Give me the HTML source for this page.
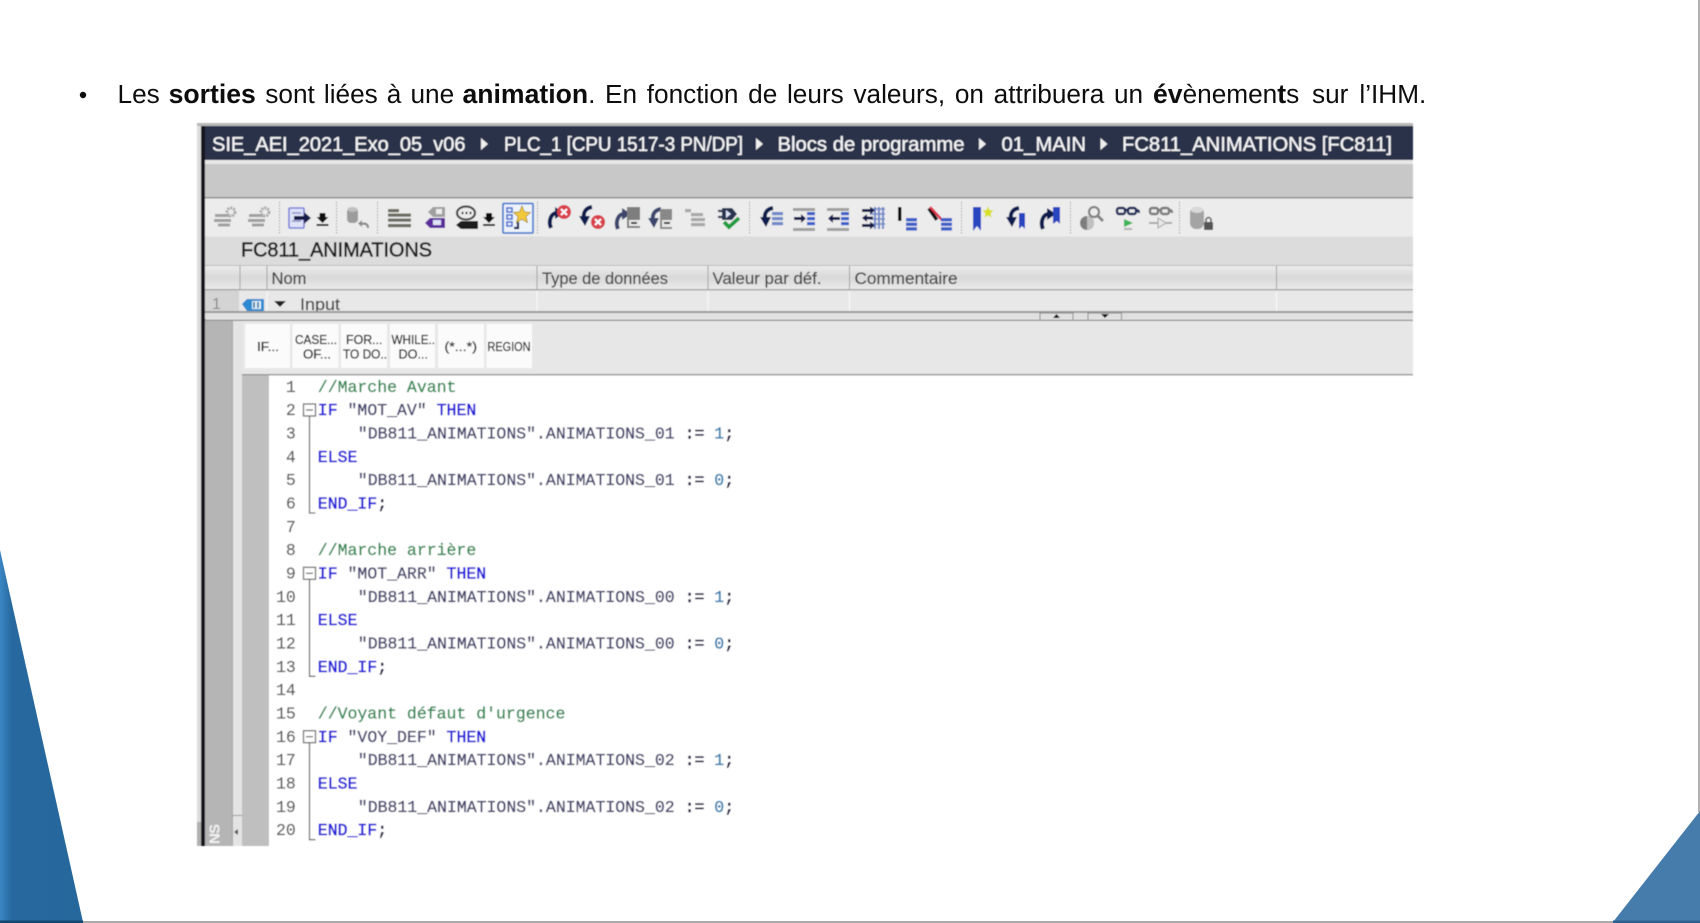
<!DOCTYPE html>
<html lang="fr">
<head>
<meta charset="utf-8">
<title>FC811_ANIMATIONS</title>
<style>
html,body{margin:0;padding:0;background:#fff;width:1700px;height:923px;overflow:hidden}
svg{display:block;position:absolute;left:0;top:0}
text{font-family:"Liberation Sans",sans-serif}
.code text{font-family:"Liberation Mono",monospace;font-size:16.5px}
.n{fill:#5c5c5c;stroke:#5c5c5c;stroke-width:.2}
.c{fill:#2c8650;stroke:#2c8650;stroke-width:.3}
.k{fill:#1c14d8;stroke:#1c14d8;stroke-width:.55}
.s{fill:#45456c;stroke:#45456c;stroke-width:.35}
.v{fill:#2f7cae;stroke:#2f7cae;stroke-width:.35}
.p{fill:#14143c;stroke:#14143c;stroke-width:.55}
.h{font-size:16.5px;fill:#444;stroke:#444;stroke-width:.2}
.b{font-size:12.5px;fill:#222;stroke:#222;stroke-width:.3}
.t{font-size:20px;fill:#f4f4f6;stroke:#f4f4f6;stroke-width:.3}
.bd{font-weight:700;font-size:26.6px}
</style>
</head>
<body>
<svg width="1700" height="923" viewBox="0 0 1700 923" xmlns="http://www.w3.org/2000/svg">
<defs>
<linearGradient id="lg" x1="0" x2="1" y1="0" y2="0"><stop offset="0" stop-color="#3a86c4"/><stop offset=".14" stop-color="#27699e"/><stop offset="1" stop-color="#26689c"/></linearGradient>
<linearGradient id="hd" x1="0" x2="0" y1="0" y2="1"><stop offset="0" stop-color="#ececec"/><stop offset=".5" stop-color="#d9d9d9"/><stop offset="1" stop-color="#eaeaea"/></linearGradient>
<filter id="bl" x="-2%" y="-2%" width="104%" height="104%"><feGaussianBlur stdDeviation=".45"/></filter>
<filter id="bl2" x="-2%" y="-2%" width="104%" height="104%"><feGaussianBlur stdDeviation=".3"/></filter>
<g id="dl"><path d="M-3 -5h6v4h3l-6 6-6-6h3z" fill="#111"/><rect x="-6" y="6" width="12" height="2" fill="#111"/></g>
<g id="arrL"><path d="M6 -9C0 -8-3-4-2 2" fill="none" stroke="#111f4e" stroke-width="4"/><path d="M-7 0h11l-5 10z" fill="#111f4e"/></g>
<g id="arrR"><path d="M-4 9C-7 2-4-6 2-6" fill="none" stroke="#111f4e" stroke-width="4"/><path d="M0-12l9 6-9 6z" fill="#111f4e"/></g>
<g id="redx"><circle r="7" fill="#d8404a"/><path d="M-3-3l6 6M3-3l-6 6" stroke="#fff" stroke-width="2"/></g>
<g id="stack"><rect x="0" y="0" width="11" height="3.4" fill="#3c5fc8"/><rect x="0" y="4.6" width="11" height="3.4" fill="#3c5fc8"/><rect x="0" y="9.2" width="11" height="3.4" fill="#3c5fc8"/></g>
<g id="glasses" fill="none" stroke-width="2.4"><rect x="-10" y="-4" width="8" height="6" rx="2"/><rect x="1" y="-4" width="8" height="6" rx="2"/><path d="M-2-2h3M9-2c2 0 3 1 3 3"/></g>
<g id="gears" fill="#a0a0a0"><rect x="-11" y="-2" width="14" height="3"/><rect x="-12" y="3" width="17" height="3"/><rect x="-8" y="7.500" width="12" height="3"/><circle cx="5" cy="-4" r="4" fill="none" stroke="#a8a8a8" stroke-width="3" stroke-dasharray="2 1"/></g>
</defs>

<!-- page frame -->
<rect x="1698" y="0" width="2" height="812" fill="#b2b2b2"/>
<rect x="0" y="921" width="1700" height="2" fill="#a9a9a9"/>
<polygon points="0,550 83,922 0,922" fill="url(#lg)"/>
<rect x="0" y="920.5" width="83" height="2.5" fill="#14466e"/>
<polygon points="1700,811 1700,922 1613,922" fill="#467cab"/>
<rect x="1613" y="920.5" width="87" height="2.5" fill="#2c5f8c"/>

<!-- headline -->
<g filter="url(#bl2)">
<circle cx="83" cy="95" r="3.200" fill="#111"/>
<text y="103" font-size="26.2" fill="#111"><tspan x="117.5">Les</tspan> <tspan x="168.6" class="bd">sorties</tspan> <tspan x="265.3" style="word-spacing:1.8px">sont liées à une</tspan> <tspan x="462.5" class="bd">animation</tspan><tspan style="word-spacing:2.41px">. En fonction de leurs valeurs, on attribuera un</tspan> <tspan x="1153" class="bd">év</tspan>ènemen<tspan class="bd">t</tspan>s <tspan x="1312">sur</tspan> <tspan x="1359.4">l’IHM.</tspan></text>
</g>

<g filter="url(#bl)">
<!-- window bands -->
<rect x="197" y="123" width="1216" height="3" fill="#b8b8b8"/>
<rect x="197" y="126" width="4" height="720" fill="#dcdcdc"/>
<rect x="201" y="126" width="4.500" height="720" fill="#14171e"/>
<rect x="205" y="126" width="1208" height="34" fill="#2b3148"/>
<rect x="205" y="160" width="1208" height="4" fill="#e8e8e8"/>
<rect x="205" y="164" width="1208" height="33" fill="#c8c8c8"/>
<rect x="205" y="197" width="1208" height="1.5" fill="#8e8e8e"/>
<rect x="205" y="198.5" width="1208" height="38" fill="#ececec"/>
<rect x="205" y="236.5" width="1208" height="29" fill="#dcdcdc"/>

<!-- breadcrumb -->
<text class="t" x="212" y="151" textLength="253.5" lengthAdjust="spacingAndGlyphs">SIE_AEI_2021_Exo_05_v06</text>
<path d="M481 138l7 6-7 6z" fill="#eee"/>
<text class="t" x="504" y="151" textLength="239" lengthAdjust="spacingAndGlyphs">PLC_1 [CPU 1517-3 PN/DP]</text>
<path d="M756 138l7 6-7 6z" fill="#eee"/>
<text class="t" x="777.5" y="151" textLength="187" lengthAdjust="spacingAndGlyphs">Blocs de programme</text>
<path d="M979 138l7 6-7 6z" fill="#eee"/>
<text class="t" x="1001.5" y="151" textLength="84.5" lengthAdjust="spacingAndGlyphs">01_MAIN</text>
<path d="M1100.5 138l7 6-7 6z" fill="#eee"/>
<text class="t" x="1122" y="151" textLength="270" lengthAdjust="spacingAndGlyphs">FC811_ANIMATIONS [FC811]</text>

<!-- toolbar separators -->
<g stroke="#9a9a9a" stroke-width="1" stroke-dasharray="1.5 1.5">
<path d="M279.5 202v32M336.5 202v32M377.5 202v32M537.5 202v32M749.5 202v32M961.5 202v32M1070.5 202v32M1179.5 202v32"/>
</g>

<!-- toolbar icons -->
<use href="#gears" x="226" y="216"/>
<use href="#gears" x="260" y="216"/>
<!-- doc + arrow -->
<rect x="289" y="208" width="15" height="20" rx="1" fill="#dfe3f8" stroke="#7a80d8" stroke-width="1.6"/>
<path d="M292 213h9M292 221h9" stroke="#8a90c8" stroke-width="1.4"/>
<path d="M294 216h10v-4l7 6-7 6v-4h-10z" fill="#121a48"/>
<use href="#dl" x="322.500" y="218"/>
<!-- cylinder undo -->
<rect x="347" y="208" width="11" height="15" rx="4" fill="#9c9c9c"/>
<ellipse cx="352.500" cy="209.500" rx="5" ry="2.500" fill="#c0c0c0"/>
<path d="M368 228c0-4-3-5-6-4" fill="none" stroke="#8a8a8a" stroke-width="2.200"/><path d="M362 220v7l-4-3.500z" fill="#8a8a8a"/>
<!-- lines -->
<g fill="#6c6c62"><rect x="388" y="209" width="11" height="3.200"/><rect x="388" y="213.500" width="23" height="3.200"/><rect x="388" y="218.500" width="23" height="3.200"/><rect x="388" y="224" width="23" height="3.200"/></g>
<!-- tags -->
<path d="M428 212l5-5h12v10h-12z" fill="#a0a0a0"/><rect x="436" y="209" width="6" height="5" fill="#eee"/>
<path d="M425 223l5-5h15v10h-15z" fill="#5b2f9c"/><rect x="433" y="220" width="8" height="5" fill="#dfe3f8"/>
<!-- speech -->
<ellipse cx="466" cy="213" rx="9" ry="6.500" fill="#ececec" stroke="#444" stroke-width="2.200"/>
<path d="M461.500 213h2M465.500 213h2M469.500 213h2" stroke="#222" stroke-width="2.200"/>
<path d="M456 225l5-4h17v8h-17z" fill="#1c1c1c"/>
<use href="#dl" x="489" y="218"/>
<!-- highlighted -->
<rect x="503" y="203.500" width="30" height="29.500" rx="1" fill="#eef3fb" stroke="#4c7fd0" stroke-width="1.800"/>
<g fill="none" stroke="#4a6fd0" stroke-width="1.600"><rect x="507" y="208" width="5" height="4"/><rect x="507" y="215" width="5" height="4"/><rect x="507" y="222" width="5" height="4"/></g>
<path d="M522 206l2.500 6 6 .5-4.500 4 1.500 6-5.500-3.300-5.500 3.300 1.500-6-4.500-4 6-.5z" fill="#f3c93a" stroke="#a88a20" stroke-width=".8"/>
<path d="M518 222v6h-4" fill="none" stroke="#111f4e" stroke-width="2.200"/>

<use href="#arrR" x="555" y="219"/><use href="#redx" x="564" y="212"/>
<use href="#arrL" x="586" y="216"/><use href="#redx" x="598" y="222"/>
<use href="#arrR" x="622" y="220" opacity=".8"/><rect x="627" y="207" width="13" height="21" fill="#7e7e7e"/><rect x="629" y="220" width="11" height="6" fill="#e8e8e8"/><rect x="631" y="222" width="6" height="2" fill="#333"/>
<use href="#arrL" x="655" y="218" opacity=".8"/><rect x="660" y="209" width="12" height="20" fill="#888"/><rect x="662" y="220" width="10" height="7" fill="#e8e8e8"/><rect x="664" y="222" width="6" height="2" fill="#333"/>
<g fill="#a8a8a8"><rect x="685" y="209" width="6" height="3.200"/><rect x="691" y="213" width="12" height="3.200"/><rect x="691" y="218" width="14" height="3.200"/><rect x="691" y="223" width="14" height="3.200"/></g>
<!-- plug check -->
<path d="M722 208h10l5 6-5 6h-10z" fill="#2c3550"/><path d="M726 210l5 4-5 4z" fill="#dfe3f8"/><path d="M718 211h4M718 217h4" stroke="#2c3550" stroke-width="2.200"/>
<path d="M724 222l5 5 10-9" fill="none" stroke="#1e9c3c" stroke-width="3.800"/>

<use href="#arrL" x="767" y="217"/><g fill="#6e88c8"><rect x="772" y="212" width="11" height="3.200"/><rect x="772" y="217" width="11" height="3.200"/><rect x="772" y="222" width="11" height="3.200"/></g>
<!-- indent -->
<rect x="793" y="208" width="22" height="3" fill="#a0a0a0"/><rect x="793" y="228" width="22" height="3" fill="#a0a0a0"/>
<path d="M794 217h7v-3l5 4.500-5 4.500v-3h-7z" fill="#121a48"/><g fill="#3c5fc8"><rect x="807" y="212" width="8" height="3.200"/><rect x="807" y="217" width="8" height="3.200"/><rect x="807" y="222" width="8" height="3.200"/></g>
<rect x="827" y="208" width="22" height="3" fill="#a0a0a0"/><rect x="827" y="228" width="22" height="3" fill="#a0a0a0"/>
<path d="M840 217h-7v-3l-5 4.500 5 4.500v-3h7z" fill="#121a48"/><g fill="#3c5fc8"><rect x="841" y="212" width="8" height="3.200"/><rect x="841" y="217" width="8" height="3.200"/><rect x="841" y="222" width="8" height="3.200"/></g>
<!-- cross arrows -->
<g stroke="#7088c8" stroke-width="2"><path d="M875 207v22M879 207v22M883 207v22"/></g>
<g stroke="#7088c8" stroke-width="1.400"><path d="M870 209h15M870 214h15M870 219h15M870 224h15"/></g>
<g fill="#121a48"><path d="M862 209h8v-2.500l5 4-5 4v-2.500h-8z"/><path d="M873 216.500h-6v-2.500l-5 4 5 4v-2.500h6z"/><path d="M862 224h8v-2.500l5 4-5 4v-2.500h-8z"/></g>
<!-- I + stack -->
<rect x="898" y="207" width="3.500" height="14" fill="#111"/><use href="#stack" x="906" y="218"/>
<rect x="931" y="207" width="3.500" height="14" fill="#111" transform="rotate(-35 933 214)"/><path d="M930 207l12 13" stroke="#e0304a" stroke-width="2.500"/><use href="#stack" x="941" y="218"/>
<!-- bookmarks -->
<path d="M973 207h8v24l-4-5-4 5z" fill="#2b45c0"/><path d="M988 206l1.500 4 4 .5-3 3 1 4-3.500-2-3.500 2 1-4-3-3 4-.5z" fill="#d8e020"/>
<use href="#arrL" x="1013" y="217"/><path d="M1019 213h6v16l-3-3-3 3z" fill="#2b45c0"/>
<use href="#arrR" x="1047" y="220"/><path d="M1053 207h7v17l-3-3-4 3z" fill="#2b45c0"/>
<!-- search -->
<circle cx="1087" cy="223" r="7" fill="#7e7e7e"/><path d="M1087 216a7 7 0 0 1 0 14z" fill="#c0c0c0"/>
<circle cx="1094" cy="212" r="5" fill="none" stroke="#808080" stroke-width="2.200"/><path d="M1098 216l5 5" stroke="#808080" stroke-width="2.800"/>
<use href="#glasses" x="1127" y="212" stroke="#1c2a58"/>
<path d="M1124 219l9 4-9 4z" fill="#3cb45a"/><path d="M1124 229h8" stroke="#b0b0b0" stroke-width="2"/>
<use href="#glasses" x="1160" y="212" stroke="#7a7a7a"/>
<path d="M1149 223h9M1166 223h6" stroke="#a0a0a0" stroke-width="1.800"/><path d="M1158 218l8 5-8 5z" fill="#e8e8e8" stroke="#a0a0a0"/>
<!-- cylinder lock -->
<rect x="1190" y="207" width="14" height="22" rx="6" fill="#a4a4a4"/><ellipse cx="1197" cy="210" rx="6" ry="3" fill="#d8d8d8"/>
<rect x="1204" y="222" width="9" height="8" rx="1" fill="#555"/><path d="M1206 222v-2a2.500 2.500 0 0 1 5 0v2" fill="none" stroke="#555" stroke-width="1.500"/>

<!-- block name -->
<text x="241" y="256.500" font-size="20" fill="#1c1c1c" stroke="#1c1c1c" stroke-width=".55" textLength="191" lengthAdjust="spacingAndGlyphs">FC811_ANIMATIONS</text>

<!-- table header -->
<rect x="205" y="265.500" width="1208" height="24" fill="url(#hd)"/>
<rect x="205" y="265" width="1208" height="1" fill="#bcbcbc"/>
<rect x="205" y="289" width="1208" height="1.500" fill="#a8a8a8"/>
<g fill="#a2a2a2"><rect x="239.500" y="266" width="1" height="23"/><rect x="266.500" y="266" width="1" height="23"/><rect x="536.500" y="266" width="1" height="23"/><rect x="707.500" y="266" width="1" height="23"/><rect x="849" y="266" width="1" height="23"/><rect x="1276" y="266" width="1" height="23"/></g>
<text class="h" x="271.500" y="283.800" textLength="35" lengthAdjust="spacingAndGlyphs">Nom</text>
<text class="h" x="542" y="283.800" textLength="126" lengthAdjust="spacingAndGlyphs">Type de données</text>
<text class="h" x="712.500" y="283.800" textLength="109" lengthAdjust="spacingAndGlyphs">Valeur par déf.</text>
<text class="h" x="854.500" y="283.800" textLength="103" lengthAdjust="spacingAndGlyphs">Commentaire</text>
<!-- row 1 -->
<rect x="205" y="290.500" width="1208" height="20.500" fill="#e8e8e8"/>
<rect x="205" y="290.500" width="34" height="20.500" fill="#d4d4d4"/>
<g fill="#fafafa"><rect x="266.500" y="291" width="1" height="20"/><rect x="536.500" y="291" width="1" height="20"/><rect x="707.500" y="291" width="1" height="20"/><rect x="849" y="291" width="1" height="20"/><rect x="1276" y="291" width="1" height="20"/></g>
<text x="212" y="309" font-size="16" fill="#8a8a8a">1</text>
<path d="M242 304l5-5h17v12h-17z" fill="#2f8ad0"/><rect x="252" y="301" width="9" height="8" fill="#dfeefa"/><path d="M254 302v6M258 302v6" stroke="#1f5f90" stroke-width="1.500"/>
<path d="M274 301h12l-6 6z" fill="#222"/>
<text x="300" y="310" font-size="16.500" fill="#444" stroke="#444" stroke-width=".2" textLength="40" lengthAdjust="spacingAndGlyphs">Input</text>
<!-- splitter -->
<rect x="205" y="311" width="1208" height="2" fill="#9a9a9a"/>
<rect x="205" y="313" width="1208" height="6" fill="#e0e0e0"/>
<rect x="205" y="319.500" width="1208" height="1.500" fill="#9a9a9a"/>
<path d="M1040 312.500v7M1073 312.500v7M1088 312.500v7M1121.500 312.500v7" stroke="#888"/>
<rect x="1040" y="312.500" width="33" height="1" fill="#888"/><rect x="1088" y="312.500" width="33" height="1" fill="#888"/>
<path d="M1056.500 314l3.500 4h-7z" fill="#111"/><path d="M1101 314h8l-4 4z" fill="#111"/>

<!-- left panels -->
<rect x="205" y="321" width="27" height="525" fill="#b5b5b5"/>
<rect x="232" y="321" width="10" height="525" fill="#e4e4e4"/>
<rect x="232" y="321" width="1" height="525" fill="#a8a8a8"/>
<rect x="197" y="822" width="4" height="24" fill="#b0b0b0"/>
<rect x="232" y="815" width="10" height="1" fill="#9a9a9a"/>
<path d="M238 829v6l-4-3z" fill="#555"/>
<text transform="translate(219.500 844) rotate(-90)" font-size="15" font-weight="700" fill="#f2f2f2" textLength="20">NS</text>

<!-- instructions toolbar -->
<rect x="242" y="321" width="1171" height="53.500" fill="#e7e7e7"/>
<rect x="242" y="374" width="1171" height="1.500" fill="#9a9a9a"/>
<g fill="#fbfbfb"><rect x="245" y="324" width="45" height="44"/><rect x="292.500" y="324" width="46" height="44"/><rect x="341" y="324" width="46" height="44"/><rect x="390" y="324" width="45" height="44"/><rect x="438" y="324" width="46" height="44"/><rect x="486.500" y="324" width="45.500" height="44"/></g>
<text class="b" x="257" y="351" textLength="22" lengthAdjust="spacingAndGlyphs">IF...</text>
<text class="b" x="295" y="344" textLength="42" lengthAdjust="spacingAndGlyphs">CASE...</text>
<text class="b" x="303" y="358.500" textLength="28" lengthAdjust="spacingAndGlyphs">OF...</text>
<text class="b" x="346" y="344" textLength="36.500" lengthAdjust="spacingAndGlyphs">FOR...</text>
<text class="b" x="343" y="358.500" textLength="44" lengthAdjust="spacingAndGlyphs">TO DO..</text>
<text class="b" x="391.500" y="344" textLength="43.500" lengthAdjust="spacingAndGlyphs">WHILE..</text>
<text class="b" x="398.500" y="358.500" textLength="29.500" lengthAdjust="spacingAndGlyphs">DO...</text>
<text class="b" x="444.500" y="351" textLength="32.500" lengthAdjust="spacingAndGlyphs">(*...*)</text>
<text class="b" x="487.500" y="351" textLength="43" lengthAdjust="spacingAndGlyphs">REGION</text>

<!-- editor -->
<rect x="242" y="375.500" width="27" height="470.500" fill="#bfbfbf"/>
<rect x="269" y="375.500" width="1144" height="470.500" fill="#fff"/>
<g fill="none" stroke="#6c6c6c" stroke-width="1.300">
<rect x="303.500" y="404" width="12" height="12" fill="#fff"/><path d="M306 410h7"/><path d="M309.500 416v97h6"/>
<rect x="303.500" y="567.300" width="12" height="12" fill="#fff"/><path d="M306 573.300h7"/><path d="M309.500 579.300v97h6"/>
<rect x="303.500" y="730.700" width="12" height="12" fill="#fff"/><path d="M306 736.700h7"/><path d="M309.500 742.700v97h6"/>
</g>
<g class="code" transform="translate(-.2 -.7)">
<g text-anchor="end">
<text class="n" x="296" y="392.500">1</text><text class="n" x="296" y="415.800">2</text><text class="n" x="296" y="439.200">3</text><text class="n" x="296" y="462.500">4</text><text class="n" x="296" y="485.800">5</text><text class="n" x="296" y="509.200">6</text><text class="n" x="296" y="532.500">7</text><text class="n" x="296" y="555.800">8</text><text class="n" x="296" y="579.200">9</text><text class="n" x="296" y="602.500">10</text><text class="n" x="296" y="625.800">11</text><text class="n" x="296" y="649.200">12</text><text class="n" x="296" y="672.500">13</text><text class="n" x="296" y="695.800">14</text><text class="n" x="296" y="719.200">15</text><text class="n" x="296" y="742.500">16</text><text class="n" x="296" y="765.800">17</text><text class="n" x="296" y="789.200">18</text><text class="n" x="296" y="812.500">19</text><text class="n" x="296" y="835.800">20</text>
</g>
<text class="c" x="318" y="392.500">//Marche Avant</text>
<text x="318" y="415.800"><tspan class="k">IF</tspan> <tspan class="s">"MOT_AV"</tspan> <tspan class="k">THEN</tspan></text>
<text x="358" y="439.200"><tspan class="s">"DB811_ANIMATIONS".ANIMATIONS_01</tspan> <tspan class="p">:=</tspan> <tspan class="v">1</tspan><tspan class="p">;</tspan></text>
<text class="k" x="318" y="462.500">ELSE</text>
<text x="358" y="485.800"><tspan class="s">"DB811_ANIMATIONS".ANIMATIONS_01</tspan> <tspan class="p">:=</tspan> <tspan class="v">0</tspan><tspan class="p">;</tspan></text>
<text x="318" y="509.200"><tspan class="k">END_IF</tspan><tspan class="p">;</tspan></text>
<text class="c" x="318" y="555.800">//Marche arrière</text>
<text x="318" y="579.200"><tspan class="k">IF</tspan> <tspan class="s">"MOT_ARR"</tspan> <tspan class="k">THEN</tspan></text>
<text x="358" y="602.500"><tspan class="s">"DB811_ANIMATIONS".ANIMATIONS_00</tspan> <tspan class="p">:=</tspan> <tspan class="v">1</tspan><tspan class="p">;</tspan></text>
<text class="k" x="318" y="625.800">ELSE</text>
<text x="358" y="649.200"><tspan class="s">"DB811_ANIMATIONS".ANIMATIONS_00</tspan> <tspan class="p">:=</tspan> <tspan class="v">0</tspan><tspan class="p">;</tspan></text>
<text x="318" y="672.500"><tspan class="k">END_IF</tspan><tspan class="p">;</tspan></text>
<text class="c" x="318" y="719.200">//Voyant défaut d'urgence</text>
<text x="318" y="742.500"><tspan class="k">IF</tspan> <tspan class="s">"VOY_DEF"</tspan> <tspan class="k">THEN</tspan></text>
<text x="358" y="765.800"><tspan class="s">"DB811_ANIMATIONS".ANIMATIONS_02</tspan> <tspan class="p">:=</tspan> <tspan class="v">1</tspan><tspan class="p">;</tspan></text>
<text class="k" x="318" y="789.200">ELSE</text>
<text x="358" y="812.500"><tspan class="s">"DB811_ANIMATIONS".ANIMATIONS_02</tspan> <tspan class="p">:=</tspan> <tspan class="v">0</tspan><tspan class="p">;</tspan></text>
<text x="318" y="835.800"><tspan class="k">END_IF</tspan><tspan class="p">;</tspan></text>
</g>
</g>
</svg>
</body>
</html>
